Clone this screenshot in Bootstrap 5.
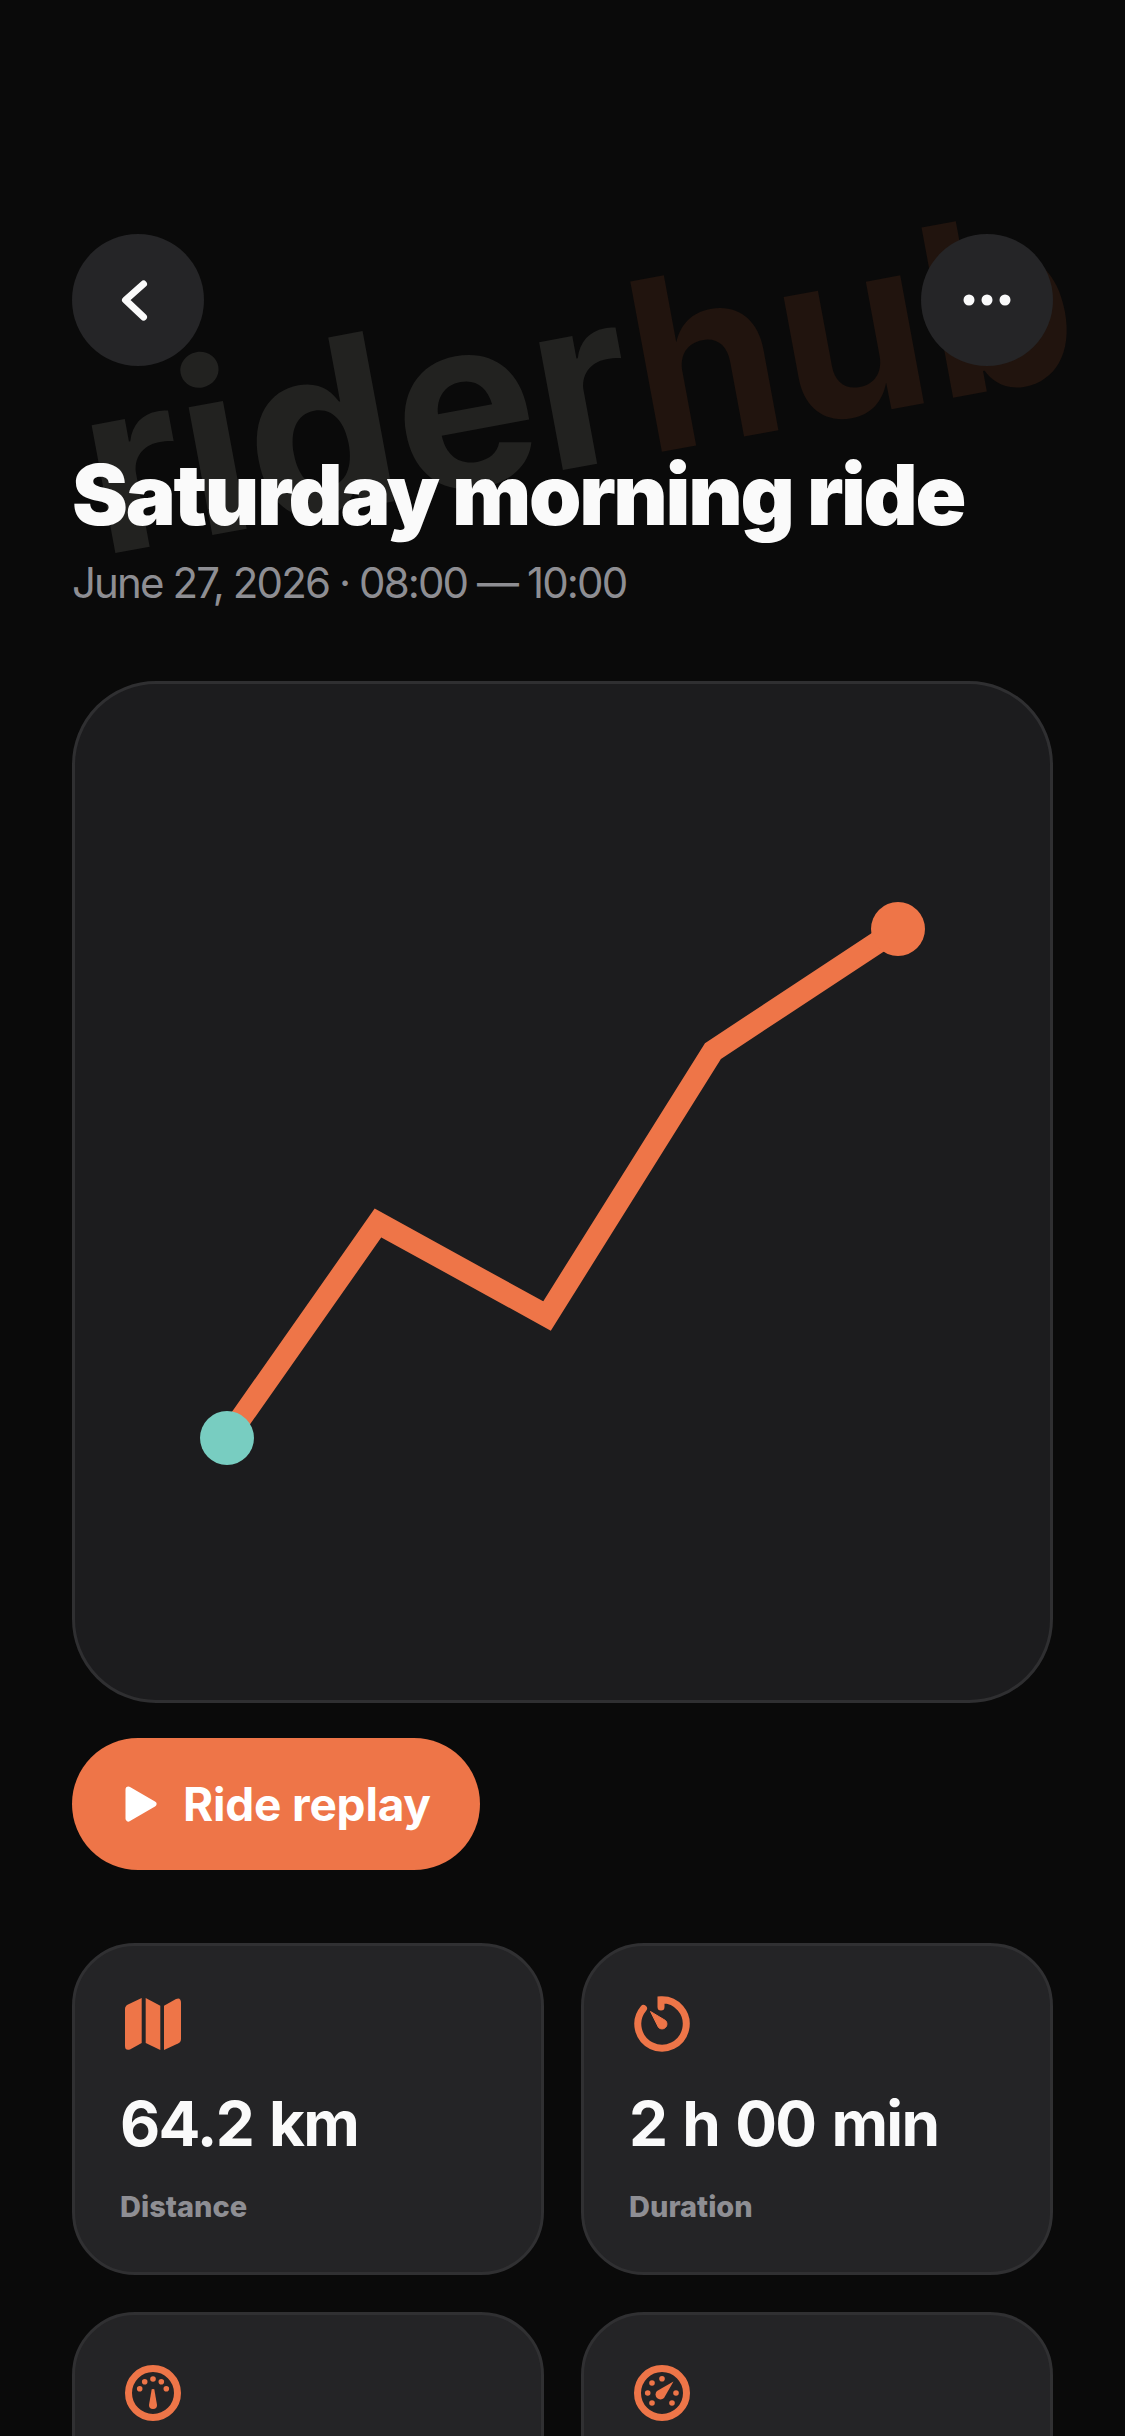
<!doctype html>
<html lang="en">
<head>
<meta charset="utf-8">
<title>Saturday morning ride</title>
<link rel="stylesheet" href="https://cdn.jsdelivr.net/npm/bootstrap@5.3.0/dist/css/bootstrap.min.css">
<style>
html,body{background:#0a0a0a;margin:0}
.screen{width:1125px;height:2436px;overflow:hidden;position:relative;background:#0a0a0a;padding:234px 72px 0;font-family:"Inter","Liberation Sans",sans-serif;color:#fafafa}
.watermark{position:absolute;left:98px;top:350px;font-size:238px;line-height:1;font-weight:700;white-space:nowrap;transform:rotate(-10.5deg);transform-origin:0 80%;color:#222220;letter-spacing:0}
.watermark span{color:#21140e}
.top-row{position:relative;z-index:1}
.round-btn{width:132px;height:132px;background:#252527;border:0;padding:0}
.ride-title{position:relative;margin:79px 0 0;font-size:84px;line-height:100px;font-weight:900;letter-spacing:-2.3px;color:#fafafa}
.ride-sub{position:relative;margin:12px 0 0;font-size:42px;line-height:52px;font-weight:400;letter-spacing:-1.9px;color:#8e8e93}
.route-map{height:1022px;margin-top:72px;background:#1c1c1e;border:3px solid #2f2f31;border-radius:84px;overflow:hidden}
.route-map svg{display:block}
.replay-btn{margin-top:35px;height:132px;width:408px;padding:0 0 0 53px;background:#ee7548;border:0;border-radius:66px;color:#fff;font-size:46px;font-weight:700;letter-spacing:-.2px;gap:26px;--bs-btn-hover-bg:#ee7548}
.stats-row{--bs-gutter-x:37px;--bs-gutter-y:37px;margin-top:36px}
.stat-box{height:332px;padding:45px 45px 0;background:#242426;border:3px solid #303032;border-radius:63px;color:#fafafa}
.stat-icon{display:block;width:66px;height:66px}
.stat-value{margin-top:27px;font-size:62px;line-height:80px;font-weight:700;letter-spacing:-1.7px;word-spacing:3px}
.stat-label{margin-top:24px;font-size:29px;line-height:38px;font-weight:800;letter-spacing:0;color:#8e8e93}
</style>
</head>
<body>
<div class="screen">
  <div class="watermark">rider<span>hub</span></div>
  <div class="top-row d-flex justify-content-between">
    <button class="round-btn btn rounded-circle d-flex align-items-center justify-content-center" aria-label="Back">
      <svg width="40" height="44" viewBox="0 0 40 44"><path d="M25.500 6 L7.500 22 L25.500 39" fill="none" stroke="#fafafa" stroke-width="7" stroke-linecap="round" stroke-linejoin="round"/></svg>
    </button>
    <button class="round-btn btn rounded-circle d-flex align-items-center justify-content-center" aria-label="More">
      <svg width="48" height="12" viewBox="0 0 48 12"><circle cx="6" cy="6" r="5.500" fill="#fafafa"/><circle cx="24" cy="6" r="5.500" fill="#fafafa"/><circle cx="42" cy="6" r="5.500" fill="#fafafa"/></svg>
    </button>
  </div>
  <h1 class="ride-title">Saturday morning ride</h1>
  <p class="ride-sub">June 27, 2026 · 08:00 — 10:00</p>
  <div class="route-map">
    <svg width="975" height="1016" viewBox="75 683 975 1016">
      <polyline points="227,1437 378,1222 547,1315 713,1050 898,928" fill="none" stroke="#ee7548" stroke-width="22" stroke-linejoin="miter"/>
      <circle cx="227" cy="1437" r="27" fill="#78cdc1"/>
      <circle cx="898" cy="928" r="27" fill="#ee7548"/>
    </svg>
  </div>
  <button class="replay-btn btn d-flex align-items-center">
    <svg width="32" height="36" viewBox="0 0 32 36"><path d="M3.500 3.500 L28.500 18 L3.500 32.500 Z" fill="#fff" stroke="#fff" stroke-width="6" stroke-linejoin="round"/></svg>
    <span>Ride replay</span>
  </button>
  <div class="row stats-row">
    <div class="col-6">
      <div class="stat-box card">
        <svg class="stat-icon" viewBox="-33 -33 66 66" fill="#ee7548"><path d="M-11.300 -26 L-25 -19.500 Q-28 -18 -28 -15 V22 Q-28 27 -23 25.500 L-11.300 19 Z"/><path d="M-7.300 -26 L7.300 -18.300 V26 L-7.300 19 Z"/><path d="M11 -18.300 L23 -25 Q28 -27 28 -21 V15 Q28 18 25 19.500 L11 26 Z"/></svg>
        <div class="stat-value">64.2 km</div>
        <div class="stat-label">Distance</div>
      </div>
    </div>
    <div class="col-6">
      <div class="stat-box card">
        <svg class="stat-icon" viewBox="-33 -33 66 66"><path d="M-1 -17 V-24.200 A24.200 24.200 0 1 1 -18.500 -15.600" fill="none" stroke="#ee7548" stroke-width="7" stroke-linecap="round"/><path d="M-11.500 -12.500 L3.500 -3.500 A4.500 4.500 0 1 1 -3.500 3.500 Z" fill="#ee7548" stroke="#ee7548" stroke-linejoin="round"/></svg>
        <div class="stat-value">2 h 00 min</div>
        <div class="stat-label">Duration</div>
      </div>
    </div>
    <div class="col-6">
      <div class="stat-box card">
        <svg class="stat-icon" viewBox="-33 -33 66 66" fill="#ee7548"><circle r="24.500" fill="none" stroke="#ee7548" stroke-width="7"/><circle cx="-13.300" cy="-4.300" r="2.800"/><circle cx="-8.300" cy="-11.300" r="2.800"/><circle cx="0" cy="-14" r="2.800"/><circle cx="8.300" cy="-11.300" r="2.800"/><circle cx="13.300" cy="-4.300" r="2.800"/><path d="M-1.300 -3.700 Q0 -4.500 1.300 -3.700 L4 12 A4 4 0 0 1 -4 12 Z"/></svg>
      </div>
    </div>
    <div class="col-6">
      <div class="stat-box card">
        <svg class="stat-icon" viewBox="-33 -33 66 66" fill="#ee7548"><circle r="24.500" fill="none" stroke="#ee7548" stroke-width="7"/><circle cx="0" cy="-14.300" r="2.800"/><circle cx="-10" cy="-10" r="2.800"/><circle cx="-14.300" cy="0" r="2.800"/><circle cx="14" cy="0" r="2.800"/><circle cx="-10" cy="10" r="2.800"/><circle cx="10" cy="10" r="2.800"/><path d="M11.500 -11.500 L2 5 A4.500 4.500 0 0 1 -5 -2 Z"/></svg>
      </div>
    </div>
  </div>
</div>
<script src="https://cdn.jsdelivr.net/npm/bootstrap@5.3.0/dist/js/bootstrap.bundle.min.js"></script>
</body>
</html>
